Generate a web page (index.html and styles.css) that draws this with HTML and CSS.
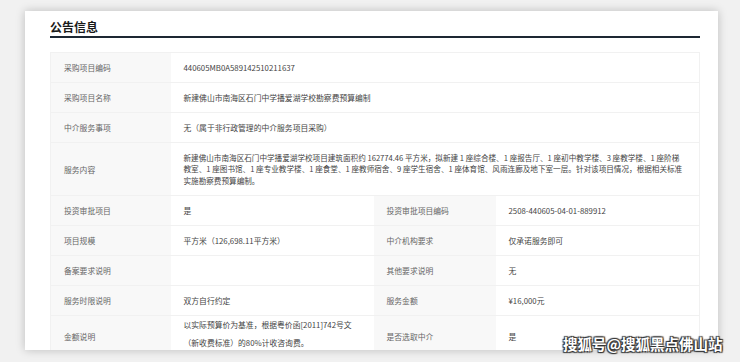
FILE: index.html
```html
<!DOCTYPE html>
<html lang="zh-CN">
<head>
  <meta charset="UTF-8" />
  <meta name="viewport" content="width=device-width, initial-scale=1.0" />
  <title>公告信息</title>
  <link rel="stylesheet" href="styles.css">
</head>
<body>
  <div class="card">
    <h2 class="card-title">公告信息</h2>
    <table class="info-table">
      <colgroup>
        <col class="c-label">
        <col class="c-value">
        <col class="c-label2">
        <col>
      </colgroup>
      <tr>
        <th>采购项目编码</th>
        <td colspan="3">440605MB0A589142510211637</td>
      </tr>
      <tr>
        <th>采购项目名称</th>
        <td colspan="3">新建佛山市南海区石门中学播爱湖学校勘察费预算编制</td>
      </tr>
      <tr>
        <th>中介服务事项</th>
        <td colspan="3">无（属于非行政管理的中介服务项目采购）</td>
      </tr>
      <tr class="tall">
        <th>服务内容</th>
        <td colspan="3" class="multi">新建佛山市南海区石门中学播爱湖学校项目建筑面积约 162774.46 平方米，拟新建 1 座综合楼、1 座报告厅、1 座初中教学楼、3 座教学楼、1 座阶梯<br>教室、1 座图书馆、1 座专业教学楼、1 座食堂、1 座教师宿舍、9 座学生宿舍、1 座体育馆、风雨连廊及地下室一层。针对该项目情况，根据相关标准<br>实施勘察费预算编制。</td>
      </tr>
      <tr>
        <th>投资审批项目</th>
        <td>是</td>
        <th>投资审批项目编码</th>
        <td>2508-440605-04-01-889912</td>
      </tr>
      <tr>
        <th>项目规模</th>
        <td>平方米（126,698.11平方米）</td>
        <th>中介机构要求</th>
        <td>仅承诺服务即可</td>
      </tr>
      <tr>
        <th>备案要求说明</th>
        <td></td>
        <th>其他要求说明</th>
        <td>无</td>
      </tr>
      <tr>
        <th>服务时限说明</th>
        <td>双方自行约定</td>
        <th>服务金额</th>
        <td>¥16,000元</td>
      </tr>
      <tr class="last">
        <th>金额说明</th>
        <td class="spaced">以实际预算价为基准，根据粤价函[2011]742号文<br>（新收费标准）的80%计收咨询费。</td>
        <th>是否选取中介</th>
        <td>是</td>
      </tr>
    </table>
  </div>
  <div class="watermark">搜狐号@搜狐黑点佛山站</div>
</body>
</html>
```

FILE: styles.css
```css
* {
  box-sizing: border-box;
}

body {
  margin: 0;
  padding: 11px 22px 0 25px;
  height: 362px;
  overflow: hidden;
  background-color: #f1f1f1;
  font-family: "Noto Sans CJK SC", "Noto Sans", sans-serif;
  color: #444;
}

.card {
  height: 339px;
  overflow: hidden;
  background-color: #fff;
  padding: 8px 18px 0 25px;
  box-shadow: 0 0 9px rgba(0,0,0,0.22);
}

.card-title {
  margin: 0;
  font-size: 12px;
  line-height: 16px;
  font-weight: bold;
  color: #1a1a1a;
  padding-bottom: 1px;
  border-bottom: 2px solid #1d2733;
}

.info-table {
  width: 650px;
  margin-top: 14px;
  border-collapse: collapse;
  table-layout: fixed;
  font-size: 7.8px;
  border: 1px solid #f1f1f1;
}

.c-label { width: 120px; }
.c-value { width: 203px; }
.c-label2 { width: 122px; }

.info-table tr {
  height: 30px;
}

.info-table tr.tall {
  height: 53px;
}

.info-table tr.last {
  height: 42px;
}

.info-table th,
.info-table td {
  border-bottom: 1px solid #f1f1f1;
  padding: 0 13px;
  text-align: left;
  vertical-align: middle;
  white-space: nowrap;
}

.info-table th {
  font-weight: normal;
  color: #666;
  background-color: #f8f8f8;
}

.info-table td {
  color: #444;
  background-color: #fff;
}

.info-table td.multi {
  font-size: 7.6px;
  line-height: 11.5px;
}

.info-table td.spaced {
  line-height: 18px;
  vertical-align: top;
  padding-top: 0;
}

.watermark {
  position: absolute;
  left: 563px;
  top: 335px;
  font-size: 14.5px;
  font-weight: bold;
  line-height: 18px;
  color: #fff;
  text-shadow: 1px 1px 1px #333, -1px -1px 1px #333, 1px -1px 1px #333, -1px 1px 1px #333;
}
```
